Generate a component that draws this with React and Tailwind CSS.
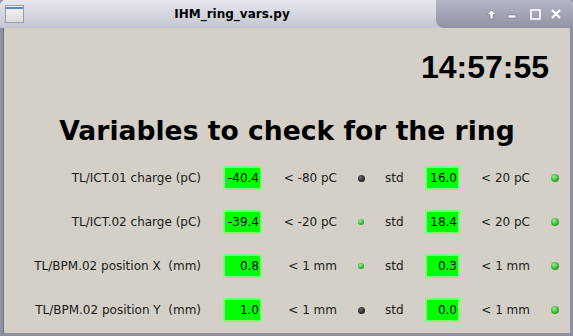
import React from 'react'

const rows = [
  { label: 'TL/ICT.01 charge (pC)', v1: '-40.4', l1: '< -80 pC', d1: 'off', v2: '16.0', l2: '< 20 pC' },
  { label: 'TL/ICT.02 charge (pC)', v1: '-39.4', l1: '< -20 pC', d1: 'on', v2: '18.4', l2: '< 20 pC' },
  { label: 'TL/BPM.02 position X  (mm)', v1: '0.8', l1: '< 1 mm', d1: 'on', v2: '0.3', l2: '< 1 mm' },
  { label: 'TL/BPM.02 position Y  (mm)', v1: '1.0', l1: '< 1 mm', d1: 'off', v2: '0.0', l2: '< 1 mm' },
]

const Led = ({ state, big }) => {
  if (state === 'off') {
    return <span className="block w-[7px] h-[7px] rounded-full bg-[radial-gradient(circle_at_40%_35%,#6a6a6a_0%,#262626_60%,#1a1a1a_100%)]" />
  }
  return (
    <span
      className={
        big
          ? 'block w-[8px] h-[8px] rounded-full bg-[radial-gradient(circle_at_40%_35%,#9cf09c_0%,#2fb52f_55%,#1c8a1c_100%)]'
          : 'block w-[6px] h-[6px] rounded-full bg-[radial-gradient(circle_at_40%_35%,#9cf09c_0%,#2fb52f_55%,#1c8a1c_100%)]'
      }
    />
  )
}

const ValueBox = ({ value, width }) => (
  <div className={`${width} h-[24px] bg-[#00ff00] border-2 border-[#7dff7d] flex items-center justify-end pr-[1px] text-black`}>
    {value}
  </div>
)

const App = () => {
  return (
    <div className="w-[573px] h-[336px] flex flex-col bg-[#8e91a2] overflow-hidden" style={{ fontFamily: '"DejaVu Sans", sans-serif' }}>
      <div className="h-[28px] flex items-stretch rounded-t-[5px] bg-gradient-to-b from-[#e6e7ee] to-[#c3c6d3] relative">
        <div className="w-[28px] flex items-center justify-center">
          <div className="w-[19px] h-[18px] border border-[#9a9ca8] bg-gradient-to-b from-[#f6f6f6] to-[#dcdcdc] flex flex-col">
            <div className="h-[2px] bg-[#5b86c4] mt-[1px]" />
          </div>
        </div>
        <div className="flex-1 flex items-center justify-center text-[12px] font-bold text-black">IHM_ring_vars.py</div>
        <div className="w-[137px] rounded-bl-[8px] rounded-tr-[5px] bg-gradient-to-b from-[#b4b6c4] to-[#9093a4] flex items-center text-white">
          <div className="ml-[49px] w-[12px] flex justify-center">
            <svg width="11" height="11" viewBox="0 0 11 11">
              <path d="M5.5 1 L10 5.5 L7 5.5 L7 10 L4 10 L4 5.5 L1 5.5 Z" fill="#ffffff" stroke="#6d7082" strokeWidth="0.6" />
            </svg>
          </div>
          <div className="ml-[9px] w-[12px] flex justify-center">
            <svg width="10" height="10" viewBox="0 0 10 10">
              <rect x="1" y="6" width="8" height="3" fill="#ffffff" stroke="#6d7082" strokeWidth="0.6" />
            </svg>
          </div>
          <div className="ml-[11px] w-[12px] flex justify-center">
            <svg width="11" height="11" viewBox="0 0 11 11">
              <rect x="1" y="1" width="9" height="9" fill="none" stroke="#ffffff" strokeWidth="1.6" />
            </svg>
          </div>
          <div className="ml-[9px] w-[12px] flex justify-center">
            <svg width="12" height="12" viewBox="0 0 12 12">
              <path d="M2 2 L10 10 M10 2 L2 10" stroke="#ffffff" strokeWidth="2.2" />
            </svg>
          </div>
        </div>
      </div>
      <div className="flex-1 mx-[3px] mb-[3px] bg-[#d4d0c8] flex flex-col border-l border-[#6c6f80]">
        <div className="mt-[23px] h-[32px] flex justify-end pr-[21px]">
          <div className="text-[32px] leading-[32px] font-bold text-black" style={{ fontFamily: '"Liberation Sans", Arial, sans-serif' }}>14:57:55</div>
        </div>
        <div className="mt-[34px] h-[27px] text-center text-[26.6px] leading-[27px] font-bold text-black">
          Variables to check for the ring
        </div>
        <div className="mt-[12px] flex flex-col text-[12px] text-[#1a1a1a]">
          {rows.map((r) => (
            <div key={r.label} className="h-[44px] flex items-center whitespace-pre">
              <div className="w-[197px] text-right">{r.label}</div>
              <div className="ml-[22px]"><ValueBox value={r.v1} width="w-[39px]" /></div>
              <div className="w-[75px] text-right">{r.l1}</div>
              <div className="w-[48px] flex justify-center"><Led state={r.d1} /></div>
              <div className="w-[40px]">std</div>
              <ValueBox value={r.v2} width="w-[35px]" />
              <div className="w-[70px] text-right">{r.l2}</div>
              <div className="ml-[21px]"><Led state="on" big /></div>
            </div>
          ))}
        </div>
      </div>
    </div>
  )
}

export default App
